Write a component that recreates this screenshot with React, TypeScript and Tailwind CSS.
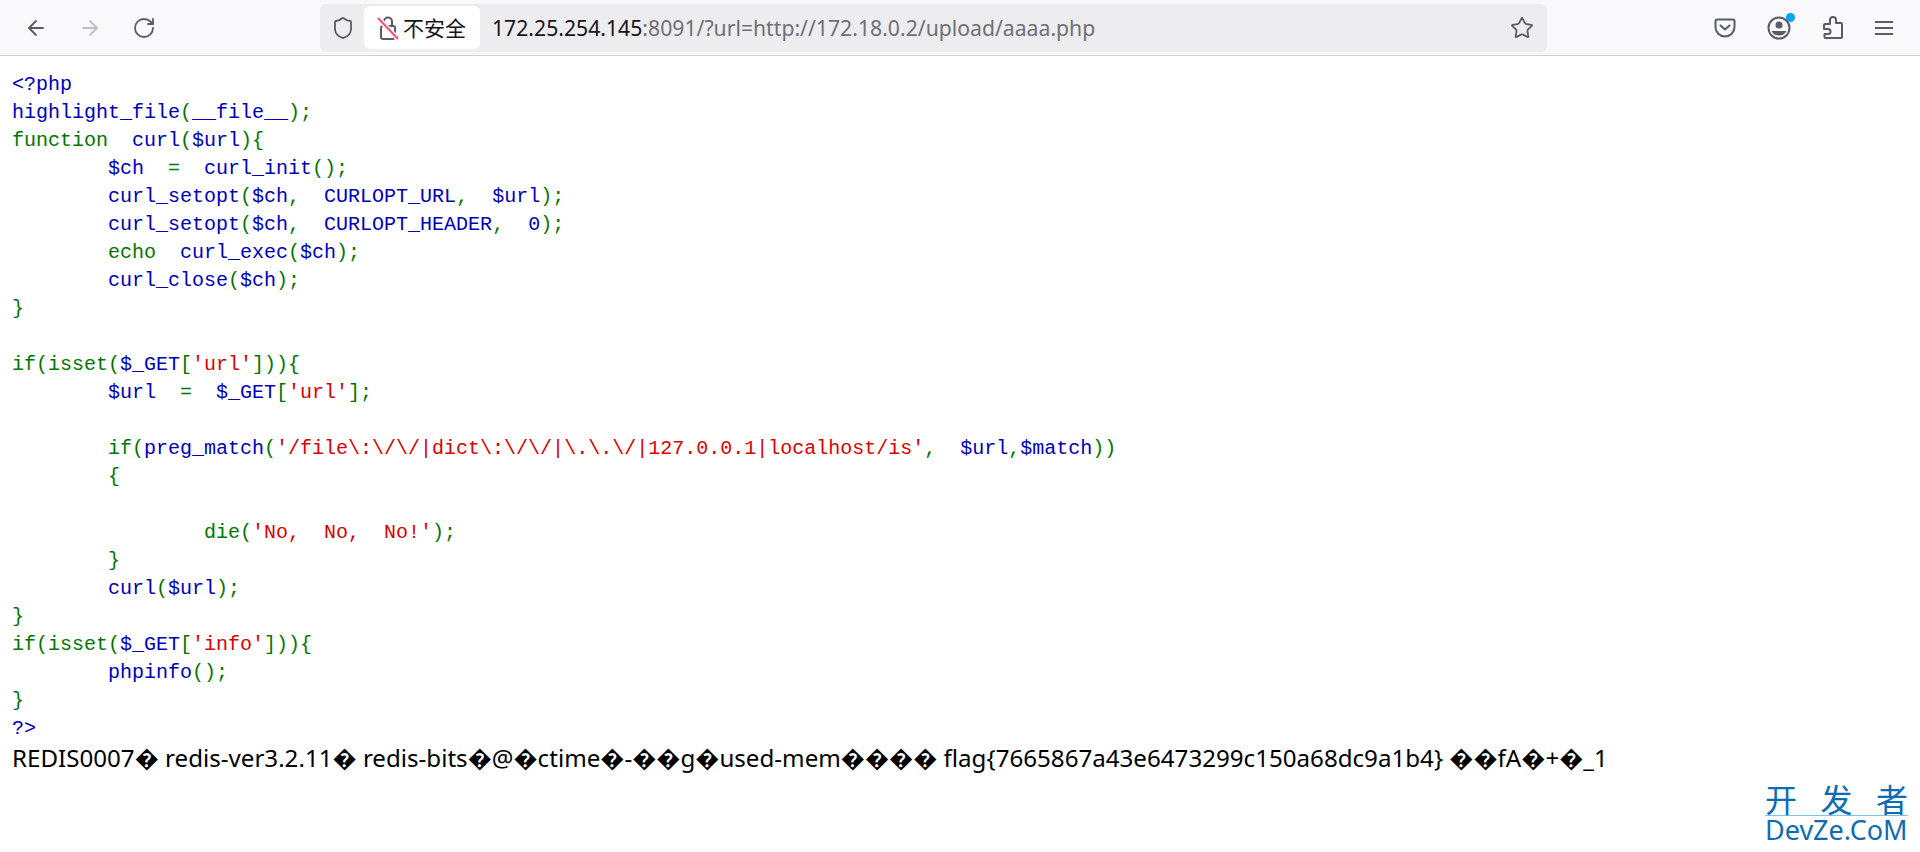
import { ArrowLeft, ArrowRight, RotateCw, Shield, Star } from 'lucide-react';

type Tok = [string, 'b' | 'g' | 'r'];

const tone = { b: 'text-[#0000bb]', g: 'text-[#007700]', r: 'text-[#dd0000]' };

const tab = '        ';

const lines: Tok[][] = [
  [['<?php', 'b']],
  [['highlight_file', 'b'], ['(', 'g'], ['__file__', 'b'], [');', 'g']],
  [['function  ', 'g'], ['curl', 'b'], ['(', 'g'], ['$url', 'b'], ['){', 'g']],
  [[tab + '$ch', 'b'], ['  =  ', 'g'], ['curl_init', 'b'], ['();', 'g']],
  [[tab + 'curl_setopt', 'b'], ['(', 'g'], ['$ch', 'b'], [',  ', 'g'], ['CURLOPT_URL', 'b'], [',  ', 'g'], ['$url', 'b'], [');', 'g']],
  [[tab + 'curl_setopt', 'b'], ['(', 'g'], ['$ch', 'b'], [',  ', 'g'], ['CURLOPT_HEADER', 'b'], [',  ', 'g'], ['0', 'b'], [');', 'g']],
  [[tab + 'echo  ', 'g'], ['curl_exec', 'b'], ['(', 'g'], ['$ch', 'b'], [');', 'g']],
  [[tab + 'curl_close', 'b'], ['(', 'g'], ['$ch', 'b'], [');', 'g']],
  [['}', 'g']],
  [],
  [['if(isset(', 'g'], ['$_GET', 'b'], ['[', 'g'], ["'url'", 'r'], ['])){', 'g']],
  [[tab + '$url', 'b'], ['  =  ', 'g'], ['$_GET', 'b'], ['[', 'g'], ["'url'", 'r'], ['];', 'g']],
  [],
  [[tab + 'if(', 'g'], ['preg_match', 'b'], ['(', 'g'], ["'/file\\:\\/\\/|dict\\:\\/\\/|\\.\\.\\/|127.0.0.1|localhost/is'", 'r'], [',  ', 'g'], ['$url', 'b'], [',', 'g'], ['$match', 'b'], ['))', 'g']],
  [[tab + '{', 'g']],
  [],
  [[tab + tab + 'die(', 'g'], ["'No,  No,  No!'", 'r'], [');', 'g']],
  [[tab + '}', 'g']],
  [[tab + 'curl', 'b'], ['(', 'g'], ['$url', 'b'], [');', 'g']],
  [['}', 'g']],
  [['if(isset(', 'g'], ['$_GET', 'b'], ['[', 'g'], ["'info'", 'r'], ['])){', 'g']],
  [[tab + 'phpinfo', 'b'], ['();', 'g']],
  [['}', 'g']],
  [['?>', 'b']],
];

function Lock() {
  return (
    <svg width="24" height="26" viewBox="0 0 24 26" fill="none" className="shrink-0">
      <path d="M8 11V6.500a4 4 0 0 1 8 0V11" stroke="#5b5b66" strokeWidth="2" />
      <rect x="5" y="11" width="14" height="13" rx="2" stroke="#5b5b66" strokeWidth="2" />
      <path d="M2 3l20 21" stroke="#f9f9fb" strokeWidth="5" />
      <path d="M2 3l20 21" stroke="#ff4f6e" strokeWidth="2" />
    </svg>
  );
}

function Pocket() {
  return (
    <svg width="22" height="20" viewBox="0 0 22 20" fill="none">
      <path d="M3 1.500h16a1.500 1.500 0 0 1 1.500 1.500v6a9.500 9.500 0 0 1-19 0V3A1.500 1.500 0 0 1 3 1.500z" stroke="#5b5b66" strokeWidth="2" />
      <path d="M6.500 7.500l4.500 4 4.500-4" stroke="#5b5b66" strokeWidth="2" strokeLinecap="round" strokeLinejoin="round" />
    </svg>
  );
}

function Account() {
  return (
    <div className="relative h-6 w-6">
      <svg width="24" height="24" viewBox="0 0 24 24" fill="none">
        <circle cx="12" cy="12" r="10.500" stroke="#5b5b66" strokeWidth="2" />
        <circle cx="12" cy="9" r="3.500" fill="#5b5b66" />
        <path d="M4.500 15h15a8.500 8.500 0 0 1-15 0z" fill="#5b5b66" />
      </svg>
      <div className="absolute -right-1 -top-[3px] h-[9px] w-[9px] rounded-full bg-[#00a6f0]" />
    </div>
  );
}

function Extensions() {
  return (
    <svg width="22" height="24" viewBox="0 0 22 24" fill="none">
      <path
        d="M8 7V4a3 3 0 0 1 6 0v3h5a1 1 0 0 1 1 1v13a1 1 0 0 1-1 1H3.500a1 1 0 0 1-1-1v-3H6a2.500 2.500 0 0 0 0-5H2v-4a1 1 0 0 1 1-1h5z"
        stroke="#5b5b66"
        strokeWidth="2"
        strokeLinejoin="round"
      />
    </svg>
  );
}

function Toolbar() {
  return (
    <header className="flex h-[56px] items-center border-b border-[#cfcfd8] bg-[#f9f9fb] pr-[27px]">
      <div className="flex w-[320px] items-center pl-[24px] text-[#5b5b66]">
        <ArrowLeft className="h-6 w-6" strokeWidth={1.8} />
        <ArrowRight className="ml-[30px] h-6 w-6 text-[#bfbfc4]" strokeWidth={1.8} />
        <RotateCw className="ml-[30px] h-6 w-6" strokeWidth={1.8} />
      </div>
      <div className="flex h-[48px] w-[1227px] items-center rounded-md bg-[#ededf0] pl-[11px] pr-[13px]">
        <Shield className="h-6 w-6 text-[#5b5b66]" strokeWidth={1.8} />
        <div className="ml-[9px] flex h-[43px] w-[116px] items-center gap-[3px] rounded-md bg-white pl-3 text-[21px] text-[#15141a] [font-family:'Noto_Sans_CJK_SC',sans-serif]">
          <Lock />
          <span>不安全</span>
        </div>
        <div className="ml-3 flex-1 whitespace-nowrap text-[21.2px] text-[#6f6f77] [font-family:'Noto_Sans','Open_Sans',sans-serif]">
          <span className="text-[#15141a]">172.25.254.145</span>:8091/?url=http://172.18.0.2/upload/aaaa.php
        </div>
        <Star className="h-6 w-6 text-[#5b5b66]" strokeWidth={1.8} />
      </div>
      <div className="ml-auto flex items-center gap-[31px]">
        <Pocket />
        <Account />
        <Extensions />
        <div className="flex w-[18px] flex-col gap-[4px]">
          <div className="h-[2px] bg-[#5b5b66]" />
          <div className="h-[2px] bg-[#5b5b66]" />
          <div className="h-[2px] bg-[#5b5b66]" />
        </div>
      </div>
    </header>
  );
}

export default function App() {
  return (
    <div className="relative h-[852px] overflow-hidden bg-white">
      <Toolbar />
      <main className="px-3 pt-[15px]">
        <code className="block whitespace-pre text-[20px] leading-[28px] [font-family:'Liberation_Mono',monospace]">
          {lines.map((line, i) => (
            <div key={i} className="h-[28px]">
              {line.map(([text, c], j) => (
                <span key={j} className={tone[c]}>{text}</span>
              ))}
            </div>
          ))}
        </code>
        <div className="whitespace-nowrap text-[24.14px] leading-[30px] text-black [font-family:'Noto_Sans','Open_Sans',sans-serif]">
          REDIS0007� redis-ver3.2.11� redis-bits�@�ctime�-��g�used-mem���� flag{'{'}7665867a43e6473299c150a68dc9a1b4{'}'} ��fA�+�_1
        </div>
      </main>
      {/* Watermark */}
      <div className="absolute bottom-[8px] left-[1765px] w-[143px] text-[#0e6cb5]">
        <div className="flex justify-between border-b border-[#7cc4ee] text-[32px] leading-[34px] [font-family:'Noto_Sans_CJK_SC',sans-serif]">
          <span>开</span><span>发</span><span>者</span>
        </div>
        <div className="text-[27px] leading-[28px] whitespace-nowrap [font-family:'Noto_Sans',sans-serif]">DevZe.CoM</div>
      </div>
    </div>
  );
}
